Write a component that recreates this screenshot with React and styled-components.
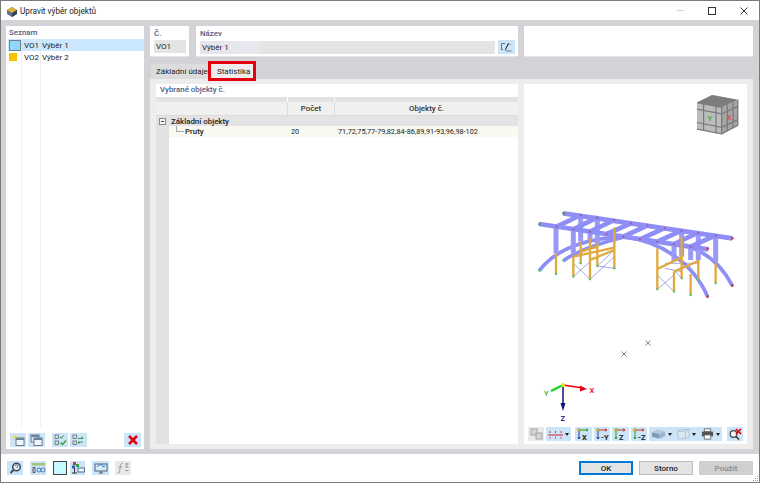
import styled, { createGlobalStyle } from "styled-components";

const Global = createGlobalStyle`
  html, body { margin: 0; padding: 0; }
  body {
    width: 760px;
    height: 483px;
    overflow: hidden;
    font-family: Roboto, "Liberation Sans", sans-serif;
    font-size: 8px;
    color: #222;
  }
`;

const Dialog = styled.div`
  width: 760px;
  height: 483px;
  box-sizing: border-box;
  display: flex;
  flex-direction: column;
  background: #fff;
  border: 1px solid #7a7a7a;
`;

const TitleBar = styled.header`
  height: 19px;
  flex: none;
  display: flex;
  align-items: center;
  padding-left: 5px;
  gap: 2px;
  font-size: 8.2px;
`;

const TitleText = styled.span`
  flex: 1;
`;

const WinButton = styled.div`
  width: 30px;
  height: 19px;
  display: flex;
  align-items: center;
  justify-content: center;
`;

const Body = styled.main`
  flex: 1;
  display: flex;
  gap: 6px;
  padding: 6px 6px 5px 5px;
  background: #d3d3d7;
  min-height: 0;
`;

const ListPanel = styled.aside`
  width: 138px;
  flex: none;
  display: flex;
  flex-direction: column;
  background: #fff;
`;

const SectionTitle = styled.div`
  color: #4f5d85;
  font-weight: 500;
  font-size: 7.9px;
  line-height: 12px;
  padding: ${(p) => p.$pad || "1px 0 0 3px"};
`;

const ListBody = styled.div`
  flex: 1;
  background:
    linear-gradient(#efefef, #efefef) 15px 0 / 1px 100% no-repeat,
    linear-gradient(#efefef, #efefef) 34px 0 / 1px 100% no-repeat;
`;

const ListRow = styled.div`
  display: grid;
  grid-template-columns: 16px 18px 1fr;
  align-items: center;
  height: 12px;
  margin-left: 2px;
  background: ${(p) => (p.$active ? "#cce8ff" : "transparent")};
`;

const Swatch = styled.span`
  width: ${(p) => (p.$active ? "12px" : "8px")};
  height: ${(p) => (p.$active ? "11px" : "8px")};
  margin-left: 1px;
  box-sizing: border-box;
  background: ${(p) => p.$color};
  border: ${(p) => (p.$active ? "1px solid #6d7f8c" : "none")};
`;

const ListFooter = styled.div`
  display: flex;
  align-items: flex-end;
  height: 20px;
  flex: none;
  padding: 0 3px 2px 4px;
`;

const IconButton = styled.button`
  width: ${(p) => p.$w || 16}px;
  height: 14px;
  padding: 0;
  border: none;
  flex: none;
  display: flex;
  align-items: center;
  justify-content: center;
  gap: 2px;
  background: ${(p) => (p.$off ? "#e9e9e9" : "#cce4f7")};
  margin-right: ${(p) => p.$after || 0}px;
`;

const Main = styled.div`
  flex: 1;
  min-width: 0;
  display: flex;
  flex-direction: column;
`;

const TopRow = styled.div`
  display: flex;
  gap: 6px;
  height: 31px;
  flex: none;
`;

const FieldCard = styled.section`
  width: ${(p) => (p.$w ? `${p.$w}px` : "auto")};
  flex: ${(p) => (p.$w ? "none" : 1)};
  box-sizing: border-box;
  background: #fff;
  border-bottom: 1px solid #e4e4e4;
  padding: 0 3px 0 4px;
  margin-right: ${(p) => p.$after || 0}px;
`;

const FieldRow = styled.div`
  display: flex;
  gap: 3px;
  align-items: center;
`;

const FieldValue = styled.div`
  flex: 1;
  height: 13px;
  line-height: 13px;
  background: ${(p) => p.$bg || "#e4e4e4"};
  padding-left: 2px;
`;

const TabStrip = styled.nav`
  height: 22px;
  flex: none;
  display: flex;
  align-items: flex-end;
  padding-left: 1px;
  position: relative;
`;

const Tab = styled.div`
  width: ${(p) => (p.$active ? "42px" : "60px")};
  box-sizing: border-box;
  height: 15px;
  line-height: 15px;
  padding-left: ${(p) => (p.$active ? "6px" : "5px")};
  background: ${(p) => (p.$active ? "#ededed" : "#dcdcdf")};
`;

const Highlight = styled.div`
  position: absolute;
  left: 58px;
  top: 4px;
  width: 48px;
  height: 20px;
  border: 3px solid #e3000f;
  box-sizing: border-box;
  pointer-events: none;
`;

const TabPanel = styled.div`
  flex: 1;
  min-height: 0;
  display: flex;
  gap: 6px;
  padding: 5px 6px;
  background: #ededed;
`;

const StatsPane = styled.div`
  width: 362px;
  flex: none;
  display: flex;
  flex-direction: column;
`;

const StatsHead = styled.div`
  height: 13px;
  flex: none;
  background: #fff;
  color: #4f5d85;
  font-weight: 500;
  font-size: 7.9px;
  line-height: 12px;
  padding-left: 4px;
`;

const Grid = styled.div`
  flex: 1;
  display: flex;
  flex-direction: column;
  background:
    linear-gradient(#e2e2e2, #e2e2e2) 0 0 / 13px 100% no-repeat,
    #fff;
`;

const HeadRow = styled.div`
  display: grid;
  grid-template-columns: 131px 46px 1fr;
  column-gap: 1px;
  height: 5px;
  background: #fff;
  & > span { background: #e2e2e2; }
`;

const ColumnRow = styled.div`
  display: grid;
  grid-template-columns: 131px 46px 1fr;
  column-gap: 1px;
  height: 14px;
  background: #dcdcdc;
  border-bottom: 1px solid #dcdcdc;
  box-sizing: border-box;
  & > span {
    background: #f0f0f0;
    text-align: center;
    line-height: 13px;
    font-weight: 500;
    font-size: 7.9px;
    color: #333;
  }
`;

const GroupRow = styled.div`
  height: 10px;
  display: flex;
  align-items: center;
  background: #e3e3e3;
  font-weight: 500;
  font-size: 7.9px;
  padding-left: 3px;
  gap: 5px;
`;

const Expander = styled.span`
  width: 7px;
  height: 7px;
  box-sizing: border-box;
  border: 1px solid #888;
  background: #f6f6f6;
  display: flex;
  align-items: center;
  justify-content: center;
  &::after {
    content: "";
    width: 3px;
    height: 1px;
    background: #444;
  }
`;

const DataRow = styled.div`
  display: grid;
  grid-template-columns: 118px 46px 1fr;
  column-gap: 1px;
  height: 11px;
  line-height: 11px;
  margin-left: 13px;
  background: #f8f9f1;
  font-size: 7.3px;
  & > span { padding-left: 3px; }
`;

const TreeCell = styled.span`
  position: relative;
  padding-left: 16px !important;
  font-weight: 500;
  font-size: 7.9px;
  &::before {
    content: "";
    position: absolute;
    left: 7px;
    top: 0;
    width: 7px;
    height: 5px;
    border-left: 1px solid #aaa;
    border-bottom: 1px solid #aaa;
  }
`;

const Preview = styled.div`
  flex: 1;
  background: #fff;
  display: flex;
  flex-direction: column;
`;

const Canvas = styled.div`
  flex: 1;
  min-height: 0;
  & > svg { display: block; }
`;

const PreviewBar = styled.div`
  height: 17px;
  flex: none;
  display: flex;
  align-items: flex-start;
  padding-left: 4px;
`;

const Caret = styled.span`
  width: 0;
  height: 0;
  border-left: 2.5px solid transparent;
  border-right: 2.5px solid transparent;
  border-top: 3px solid #222;
`;

const Footer = styled.footer`
  height: 28px;
  flex: none;
  display: flex;
  align-items: center;
  padding: 0 6px;
  position: relative;
`;

const PlainSwatch = styled.span`
  width: 14px;
  height: 14px;
  box-sizing: border-box;
  background: #c5fbff;
  border: 1px solid #444;
  margin-right: 3px;
  flex: none;
`;

const ActionButton = styled.button`
  width: 54px;
  height: 14px;
  padding: 0;
  box-sizing: border-box;
  font: 500 8px Roboto, "Liberation Sans", sans-serif;
  color: ${(p) => (p.$off ? "#8a8a8a" : "#222")};
  background: ${(p) => (p.$off ? "#cfcfcf" : "#e3e3e3")};
  border: ${(p) =>
    p.$primary ? "1px solid #0078d7" : `1px solid ${p.$off ? "#cfcfcf" : "#bdbdbd"}`};
  box-shadow: ${(p) => (p.$primary ? "inset 0 0 0 1px #0078d7" : "none")};
  margin-left: ${(p) => p.$gap || 0}px;
`;

const Spacer = styled.div`
  flex: 1;
`;

const Grip = styled.svg`
  position: absolute;
  right: 0;
  bottom: 0;
`;

function AppIcon() {
  return (
    <svg width="12" height="12" viewBox="0 0 12 12">
      <path d="M1 5l5-3 5 3v4l-5 3-5-3z" fill="#5b6f86" />
      <path d="M6 2l5 3-5 3-5-3z" fill="#e0b23c" />
      <path d="M6 8v4l5-3V5z" fill="#33445a" />
    </svg>
  );
}

function EditIcon() {
  return (
    <svg width="11" height="10" viewBox="0 0 11 10" fill="none">
      <path d="M4 1.500H.5v6H2" stroke="#555" strokeWidth=".8" />
      <path d="M7 1L4 7.500l-.3 1 1-.6L8 1.600z" fill="#222" />
      <path d="M5 9h5.500M9 2v1" stroke="#555" strokeWidth=".8" />
    </svg>
  );
}

function NewIcon() {
  return (
    <svg width="13" height="12" viewBox="0 0 13 12">
      <rect x="4" y="4" width="8" height="7.500" fill="#eef6fb" stroke="#4e6275" strokeWidth=".8" />
      <rect x="4" y="4" width="8" height="2" fill="#6c8296" />
      <path d="M3 .5l.7 1.600 1.800.1-1.400 1 .5 1.700L3 4l-1.600 1 .5-1.700-1.400-1 1.800-.1z" fill="#f5d33d" />
    </svg>
  );
}

function CopyIcon() {
  return (
    <svg width="13" height="12" viewBox="0 0 13 12">
      <rect x="1" y="1" width="8" height="7" fill="#dfe8ef" stroke="#4e6275" strokeWidth=".8" />
      <rect x="1" y="1" width="8" height="2" fill="#6c8296" />
      <rect x="4" y="4" width="8" height="7.500" fill="#eef6fb" stroke="#4e6275" strokeWidth=".8" />
      <rect x="4" y="4" width="8" height="2" fill="#6c8296" />
    </svg>
  );
}

function CheckAllIcon() {
  return (
    <svg width="13" height="12" viewBox="0 0 13 12" fill="none">
      <rect x="1" y="1" width="3.500" height="3.500" stroke="#555" strokeWidth=".7" />
      <rect x="1" y="7" width="3.500" height="3.500" stroke="#555" strokeWidth=".7" />
      <path d="M6 3l1.200 1.300L9.500 1.500" stroke="#2a8a2a" />
      <path d="M6.500 8.500l2 2 3.500-4" stroke="#2aa52a" strokeWidth="1.300" />
    </svg>
  );
}

function SwapIcon() {
  return (
    <svg width="13" height="12" viewBox="0 0 13 12" fill="none">
      <rect x="1" y="1" width="3.500" height="3.500" stroke="#555" strokeWidth=".7" />
      <rect x="1" y="7" width="3.500" height="3.500" stroke="#555" strokeWidth=".7" />
      <path d="M6 4.500h5M11 4.500L9.500 3M6 8h5M6 8l1.500 1.500" stroke="#3aa04a" strokeWidth="1.100" />
    </svg>
  );
}

function DeleteIcon() {
  return (
    <svg width="10" height="10" viewBox="0 0 10 10">
      <path d="M1 1l8 8M9 1l-8 8" stroke="#e3000f" strokeWidth="2.600" />
    </svg>
  );
}

function SearchHelpIcon() {
  return (
    <svg width="13" height="12" viewBox="0 0 13 12" fill="none">
      <circle cx="7.500" cy="5" r="3.800" fill="#e6eef4" stroke="#3c4a58" strokeWidth="1.500" />
      <path d="M4.500 8L1.500 11" stroke="#3c4a58" strokeWidth="1.800" />
      <path d="M6.300 4c0-1.600 2.600-1.600 2.600 0 0 1-1.300 1-1.300 2" stroke="#3c4a58" strokeWidth=".8" />
    </svg>
  );
}

function UnitsIcon() {
  return (
    <svg width="15" height="12" viewBox="0 0 15 12" fill="none">
      <rect x="1" y="1" width="13" height="2.500" fill="#9cc47a" />
      <path d="M2 5.500h2v5H2z" stroke="#333" strokeWidth=".8" />
      <circle cx="8" cy="8" r="2" stroke="#3d6fb5" strokeWidth=".9" />
      <circle cx="12" cy="8" r="2" stroke="#3d6fb5" strokeWidth=".9" />
    </svg>
  );
}

function ColorsIcon() {
  return (
    <svg width="14" height="12" viewBox="0 0 14 12">
      <rect x="2" y="0" width="3" height="3" fill="#d8342c" />
      <rect x="5" y="2" width="3" height="3" fill="#2f9e44" />
      <rect x="1" y="3.500" width="3" height="3" fill="#2b5fc2" />
      <path d="M3.500 6v5M1 11h5" stroke="#333" />
      <rect x="7" y="6" width="6.500" height="4" fill="#eef6fb" stroke="#2d4a6d" strokeWidth=".8" />
    </svg>
  );
}

function ScreenIcon() {
  return (
    <svg width="14" height="12" viewBox="0 0 14 12" fill="none">
      <rect x="1" y="2" width="12" height="7" fill="#d9ecf8" stroke="#4e6275" />
      <path d="M5 11h4M7 9v2" stroke="#4e6275" />
      <path d="M3 5c2-3 6-3 7 0M10 5l-1.500-.5M10 5l.8-1.300" stroke="#2a7cc7" />
    </svg>
  );
}

function FormulaIcon() {
  return (
    <svg width="14" height="12" viewBox="0 0 14 12" fill="none">
      <path d="M2 11c2 0 1.500-1.500 2-5s1-5 3-5" stroke="#999" />
      <path d="M2.500 5h3.500M9 2h3.500M9 5h3.500M10.800 1v4M9 8.500h3.500" stroke="#999" />
    </svg>
  );
}

function ViewsIcon() {
  return (
    <svg width="13" height="12" viewBox="0 0 13 12" fill="none">
      <rect x="1" y="1" width="6" height="6" fill="#d4d4d4" stroke="#a5a5a5" />
      <rect x="6" y="5" width="6" height="6" fill="#d4d4d4" stroke="#a5a5a5" />
    </svg>
  );
}

function NumberingIcon() {
  return (
    <svg width="15" height="12" viewBox="0 0 15 12" fill="none">
      <path d="M0 7h15" stroke="#d3232a" />
      <path d="M2 3v2M7.500 3v2M13 3v2M2 9v1.500M7.500 9v1.500M13 9v1.500" stroke="#d3232a" strokeWidth=".9" />
    </svg>
  );
}

function AxisIcon({ label, h = "#2b9a2b", v = "#1c3f94" }) {
  return (
    <svg width="15" height="13" viewBox="0 0 15 13" fill="none">
      <path d="M3 2h9M12 2L10 .8M12 2L10 3.200" stroke={h} />
      <path d="M3 2v9M3 11L1.800 9M3 11l1.200-2" stroke={v} />
      <circle cx="3" cy="2" r="1.400" fill="#f2cf2e" stroke="#6d5c10" strokeWidth=".4" />
      <text x="6" y="11.500" fontSize="7.500" fontWeight="700" fill="#222" fontFamily="Roboto">
        {label}
      </text>
    </svg>
  );
}

function IsoIcon() {
  return (
    <svg width="15" height="12" viewBox="0 0 16 12">
      <path d="M1 4l6-3 8 2-6 3z" fill="#b6c9da" />
      <path d="M1 4l8 2v5L1 9z" fill="#7f9cb7" />
      <path d="M9 6l6-3v5l-6 3z" fill="#9ab3c9" />
    </svg>
  );
}

function BoxIcon() {
  return (
    <svg width="13" height="12" viewBox="0 0 14 12" fill="#dce6ef" stroke="#a7b8c6" strokeWidth=".8">
      <path d="M1 3l4-2h8v8l-4 2H1z" />
      <path d="M1 3h8v8M9 3l4-2" fill="none" />
    </svg>
  );
}

function PrintIcon() {
  return (
    <svg width="13" height="12" viewBox="0 0 14 12">
      <rect x="3.500" y="0.500" width="7" height="3" fill="#fff" stroke="#555" strokeWidth=".8" />
      <rect x="1" y="3.500" width="12" height="5" fill="#555" />
      <rect x="3.500" y="7" width="7" height="4.500" fill="#fff" stroke="#555" strokeWidth=".8" />
    </svg>
  );
}

function ResetViewIcon() {
  return (
    <svg width="14" height="12" viewBox="0 0 14 12" fill="none">
      <circle cx="5.500" cy="6" r="3.300" stroke="#444" strokeWidth="1.200" fill="#eef6fb" />
      <path d="M8 8.500l3 3" stroke="#333" strokeWidth="1.600" />
      <path d="M8 1l5 5M13 1L8 6" stroke="#e3000f" strokeWidth="1.700" />
    </svg>
  );
}

function ViewCube() {
  return (
    <g transform="translate(696 94) scale(.95)">
      <path d="M1 9L17 1l27 5v27l-17 9L1 37z" fill="#bcbcbc" />
      <path d="M1 9L17 1l27 5-17 8z" fill="#7d7d7d" />
      <path d="M27 14l17-8v27l-17 9z" fill="#a5a5a5" />
      <g stroke="#7a7a7a" strokeWidth="1.300" fill="none">
        <path d="M1 9l26 5v28M1 37l26 5 17-9V6" />
        <path d="M1 16l26 5 17-8M1 30l26 5 17-8M8 10v28M21 13v28M33 11v28M39 8v28" />
      </g>
      <text x="12" y="28" fontSize="8" fontWeight="700" fill="#38b54a" fontFamily="Roboto">Y</text>
      <text x="33" y="27" fontSize="7" fontWeight="700" fill="#d9534f" fontFamily="Roboto">X</text>
    </g>
  );
}

// souřadnice modelu jsou ve 3x zvětšeném výřezu náhledu
const deck = [
  [115, 40, 622, 115], [43, 72, 550, 148],
  [95, 80, 168, 45], [145, 88, 217, 52], [195, 95, 268, 60], [245, 102, 318, 70], [295, 110, 368, 76],
  [345, 118, 420, 84], [397, 125, 470, 92], [447, 132, 520, 98], [497, 140, 572, 106],
];
const posts = [
  [93, 80, 93, 160], [167, 45, 167, 125], [217, 52, 217, 130], [145, 88, 145, 160], [195, 95, 195, 120],
  [447, 130, 447, 185], [497, 140, 497, 180], [520, 98, 520, 180], [572, 105, 572, 185], [470, 92, 470, 170],
];
const arches = [
  "M43 212C90 150 180 115 300 110",
  "M115 182C160 150 220 130 300 110",
  "M300 110C400 125 500 180 548 290",
  "M470 135C540 150 590 195 622 257",
];
const timber = [
  [93, 162, 93, 222], [145, 170, 145, 230], [167, 128, 167, 190], [195, 115, 195, 238], [217, 130, 217, 198],
  [268, 82, 268, 205], [397, 145, 397, 268], [447, 215, 447, 275], [470, 110, 470, 235], [497, 222, 497, 285],
  [520, 180, 520, 240], [572, 190, 572, 250],
  [145, 170, 268, 143], [167, 155, 217, 140], [195, 180, 268, 150], [397, 207, 470, 172], [447, 215, 520, 183],
];
const bracing = [
  [145, 230, 195, 185], [195, 238, 145, 190], [195, 238, 268, 170], [217, 198, 268, 205], [268, 150, 217, 198],
  [397, 268, 447, 225], [447, 275, 397, 225], [447, 210, 470, 235], [420, 190, 520, 190], [420, 205, 470, 215],
];
const feet = [
  [43, 212], [93, 222], [115, 182], [145, 230], [167, 190], [195, 238], [217, 198], [268, 205],
  [397, 268], [447, 275], [470, 235], [497, 285], [520, 240], [572, 250],
];
const ends = [[622, 115], [622, 257], [548, 290], [548, 146]];
const joints = [
  [168, 46], [217, 53], [268, 60], [318, 70], [368, 76], [420, 85], [470, 92], [520, 99], [572, 106],
  [95, 80], [145, 88], [195, 95], [245, 102], [295, 110], [345, 118], [397, 125], [447, 132], [497, 140],
];

function Bar({ b, color, w }) {
  return <line x1={b[0]} y1={b[1]} x2={b[2]} y2={b[3]} stroke={color} strokeWidth={w} />;
}

function Model() {
  return (
    <g transform="translate(525 200) scale(.3333)" fill="none">
      <g opacity=".9">
        {arches.map((d) => <path key={d} d={d} stroke="#8282f4" strokeWidth="11" />)}
        {posts.map((b) => <Bar key={b.join()} b={b} color="#9090f6" w="15" />)}
        {deck.map((b) => <Bar key={b.join()} b={b} color="#8282f6" w="14" />)}
      </g>
      {bracing.map((b) => <Bar key={b.join()} b={b} color="#6f7fe0" w="2" />)}
      {timber.map((b) => <Bar key={b.join()} b={b} color="#dfa93e" w="7" />)}
      {joints.map(([x, y]) => <circle key={`${x}-${y}`} cx={x} cy={y} r="3" fill="#a8527e" />)}
      {feet.map(([x, y]) => <circle key={`${x}-${y}`} cx={x} cy={y} r="3.500" fill="#49c96a" />)}
      {ends.map(([x, y]) => <circle key={`${x}-${y}`} cx={x} cy={y} r="4" fill="#d0343c" />)}
      <rect x="112" y="36" width="7" height="8" fill="#5d8a5d" />
      <rect x="40" y="68" width="7" height="8" fill="#5d8a5d" />
    </g>
  );
}

function Marks() {
  return (
    <path d="M645.500 340.500l5 5M650.500 340.500l-5 5M621.500 351.500l5 5M626.500 351.500l-5 5" stroke="#666" strokeWidth=".8" fill="none" />
  );
}

function Axes() {
  return (
    <g fill="none">
      <path d="M563 385L583 388" stroke="#e3000f" strokeWidth="1.500" />
      <path d="M587 389L580 385.500v6z" fill="#e3000f" />
      <path d="M563 385L551 391" stroke="#19d419" strokeWidth="2.500" />
      <path d="M563 385v20" stroke="#10107f" strokeWidth="1.500" />
      <path d="M563 411l-2.500-8h5z" fill="#10107f" />
      <circle cx="563" cy="385" r="2" fill="#f3e021" />
      <text x="589.500" y="393" fontSize="7.500" fontWeight="500" fill="#e3000f" fontFamily="Roboto">X</text>
      <text x="544" y="396" fontSize="7.500" fontWeight="500" fill="#19b019" fontFamily="Roboto">Y</text>
      <text x="560.500" y="421" fontSize="7.500" fontWeight="500" fill="#10107f" fontFamily="Roboto">Z</text>
    </g>
  );
}

export default function App() {
  return (
    <Dialog>
      <Global />
      <TitleBar>
        <AppIcon />
        <TitleText>Upravit výběr objektů</TitleText>
        <WinButton>
          <svg width="7" height="1"><path d="M0 .5h7" stroke="#d0d0d0" /></svg>
        </WinButton>
        <WinButton>
          <svg width="8" height="8" fill="none"><rect x=".5" y=".5" width="7" height="7" stroke="#333" /></svg>
        </WinButton>
        <WinButton>
          <svg width="8" height="8" fill="none"><path d="M.5 .5l7 7M7.500 .5l-7 7" stroke="#333" /></svg>
        </WinButton>
      </TitleBar>
      <Body>
        <ListPanel>
          <SectionTitle>Seznam</SectionTitle>
          <ListBody>
            <ListRow $active>
              <Swatch $active $color="#8fd8f8" />
              <span>VO1</span>
              <span>Výběr 1</span>
            </ListRow>
            <ListRow>
              <Swatch $color="#f7c400" />
              <span>VO2</span>
              <span>Výběr 2</span>
            </ListRow>
          </ListBody>
          <ListFooter>
            <IconButton $after={2}><NewIcon /></IconButton>
            <IconButton $w={17} $after={7}><CopyIcon /></IconButton>
            <IconButton $after={2}><CheckAllIcon /></IconButton>
            <IconButton $w={17}><SwapIcon /></IconButton>
            <Spacer />
            <IconButton $w={17}><DeleteIcon /></IconButton>
          </ListFooter>
        </ListPanel>
        <Main>
          <TopRow>
            <FieldCard $w={39} $after={1}>
              <SectionTitle $pad="2px 0 0 0">Č.</SectionTitle>
              <FieldValue>VO1</FieldValue>
            </FieldCard>
            <FieldCard $w={322}>
              <SectionTitle $pad="2px 0 0 0">Název</SectionTitle>
              <FieldRow>
                <FieldValue $bg="linear-gradient(90deg, #e4e4ee 0, #e8e8f0 18%, #e4e4e4 22%)">Výběr 1</FieldValue>
                <IconButton $w={17}><EditIcon /></IconButton>
              </FieldRow>
            </FieldCard>
            <FieldCard />
          </TopRow>
          <TabStrip>
            <Tab>Základní údaje</Tab>
            <Tab $active>Statistika</Tab>
            <Highlight />
          </TabStrip>
          <TabPanel>
            <StatsPane>
              <StatsHead>Vybrané objekty č.</StatsHead>
              <Grid>
                <HeadRow><span /><span /><span /></HeadRow>
                <ColumnRow>
                  <span />
                  <span>Počet</span>
                  <span>Objekty č.</span>
                </ColumnRow>
                <GroupRow><Expander />Základní objekty</GroupRow>
                <DataRow>
                  <TreeCell>Pruty</TreeCell>
                  <span>20</span>
                  <span>71,72,75,77-79,82,84-86,89,91-93,96,98-102</span>
                </DataRow>
              </Grid>
            </StatsPane>
            <Preview>
              <Canvas>
                <svg width="223" height="343" viewBox="524 84 223 343">
                  <ViewCube />
                  <Model />
                  <Marks />
                  <Axes />
                </svg>
              </Canvas>
              <PreviewBar>
                <IconButton $off $after={2}><ViewsIcon /></IconButton>
                <IconButton $w={25} $after={4}><NumberingIcon /><Caret /></IconButton>
                <IconButton $w={17} $after={2}><AxisIcon label="X" /></IconButton>
                <IconButton $after={2}><AxisIcon label="-Y" h="#c0392b" /></IconButton>
                <IconButton $w={17} $after={2}><AxisIcon label="Z" h="#c0392b" v="#2b9a2b" /></IconButton>
                <IconButton $after={2}><AxisIcon label="-Z" h="#c0392b" v="#2b9a2b" /></IconButton>
                <IconButton $w={25}><IsoIcon /><Caret /></IconButton>
                <IconButton $w={25}><BoxIcon /><Caret /></IconButton>
                <IconButton $w={23} $after={5}><PrintIcon /><Caret /></IconButton>
                <IconButton><ResetViewIcon /></IconButton>
              </PreviewBar>
            </Preview>
          </TabPanel>
        </Main>
      </Body>
      <Footer>
        <IconButton $after={7}><SearchHelpIcon /></IconButton>
        <IconButton $after={7}><UnitsIcon /></IconButton>
        <PlainSwatch />
        <IconButton $w={15} $after={7}><ColorsIcon /></IconButton>
        <IconButton $w={17} $after={6}><ScreenIcon /></IconButton>
        <IconButton $off><FormulaIcon /></IconButton>
        <Spacer />
        <ActionButton $primary>OK</ActionButton>
        <ActionButton $gap={6}>Storno</ActionButton>
        <ActionButton $gap={6} $off>Použít</ActionButton>
        <Grip width="7" height="7" viewBox="0 0 7 7" fill="#999">
          <rect x="5" y="1" width="1" height="1" />
          <rect x="3" y="3" width="1" height="1" />
          <rect x="5" y="3" width="1" height="1" />
          <rect x="1" y="5" width="1" height="1" />
          <rect x="3" y="5" width="1" height="1" />
          <rect x="5" y="5" width="1" height="1" />
        </Grip>
      </Footer>
    </Dialog>
  );
}
